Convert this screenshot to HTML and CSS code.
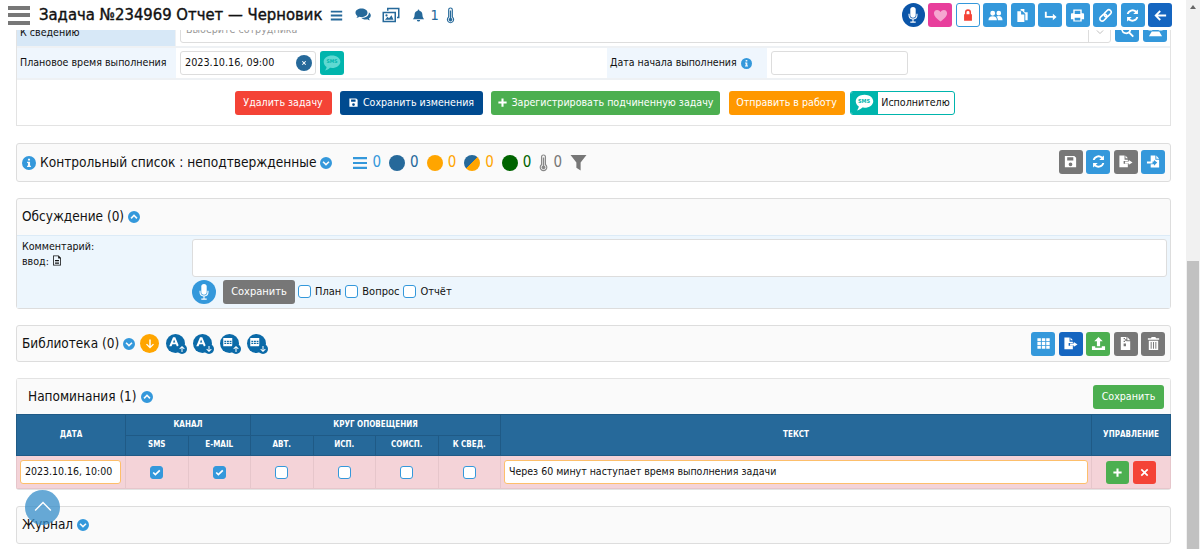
FILE: index.html
```html
<!DOCTYPE html>
<html lang="ru">
<head>
<meta charset="utf-8">
<title>Задача №234969</title>
<link rel="stylesheet" href="styles.css">
</head>
<body>
<svg class="defs" xmlns="http://www.w3.org/2000/svg">
<symbol id="i-bars" viewBox="0 0 16 16"><path d="M1 2h14v2.200H1zM1 6.900h14v2.200H1zM1 11.800h14V14H1z"/></symbol>
<symbol id="i-comments" viewBox="0 0 16 16"><path d="M6.500 1.500C3 1.500.5 3.300.5 5.700c0 1.300.8 2.500 2 3.300-.2.700-.6 1.300-1.100 1.800 1 0 2.100-.5 2.900-1.100.7.200 1.400.3 2.200.3 3.500 0 6-1.900 6-4.300S10 1.500 6.500 1.500z"/><path d="M13.800 5.200c.1.200.1.400.1.600 0 3-3 5-6.800 5l-.9-.1c1 1.100 2.500 1.800 4.300 1.800.6 0 1.200-.1 1.700-.2.800.6 1.700 1 2.800 1-.5-.5-.9-1.100-1.100-1.800 1.200-.8 1.900-1.800 1.900-3 0-1.300-.8-2.500-2-3.300z"/></symbol>
<symbol id="i-images" viewBox="0 0 18 16"><path d="M5 .8h12.500v10.500H15V9.800h1V2.300H6.500v1.500H5zM.5 4.800h13.500v10.500H.5zM2 6.300v7.500h10.500V6.300zM3 12.800l2.500-3 1.500 1.500 2.500-3 2 4.500zM4.500 7.300a1.100 1.100 0 1 1 0 2.200 1.100 1.100 0 0 1 0-2.200z" fill-rule="evenodd"/></symbol>
<symbol id="i-bell" viewBox="0 0 16 16"><path d="M8 .5c.6 0 1 .4 1 1v.6c2.300.4 3.800 2.300 3.800 4.600 0 3.500 1.200 4.500 2.200 5.800H1c1-1.300 2.200-2.300 2.200-5.800C3.200 4.400 4.700 2.500 7 2.100v-.6c0-.6.400-1 1-1zM6 13.500h4a2 2 0 0 1-4 0z"/></symbol>
<symbol id="i-thermo" viewBox="0 0 10 20"><path fill-rule="evenodd" d="M5 .5A2.800 2.800 0 0 1 7.800 3.300v8.200a4.300 4.300 0 1 1-5.600 0V3.300A2.800 2.800 0 0 1 5 .5zm0 1.300c-.8 0-1.500.7-1.500 1.500v8.900a3 3 0 1 0 3 0V3.300C6.500 2.500 5.800 1.800 5 1.800z"/><path d="M4.200 4h1.600v9a2 2 0 1 1-1.600 0z"/></symbol>
<symbol id="i-mic" viewBox="0 0 16 20"><path d="M8 1a3 3 0 0 1 3 3v6a3 3 0 0 1-6 0V4a3 3 0 0 1 3-3z"/><path d="M3 8.500h1.200V10a3.800 3.800 0 0 0 7.600 0V8.500H13V10a5 5 0 0 1-4.400 5v2.300H11v1.200H5v-1.200h2.400V15A5 5 0 0 1 3 10z"/></symbol>
<symbol id="i-heart" viewBox="0 0 16 16"><path d="M8 14.500C3.500 10.800 1 8.400 1 5.500 1 3.300 2.600 2 4.400 2 5.800 2 7.200 2.800 8 4.200 8.800 2.800 10.200 2 11.600 2 13.400 2 15 3.300 15 5.500c0 2.900-2.500 5.300-7 9z"/></symbol>
<symbol id="i-lock" viewBox="0 0 16 16"><path fill-rule="evenodd" d="M4.500 7V5a3.500 3.500 0 0 1 7 0v2h1v7.500h-9V7zm1.800 0h3.400V5a1.700 1.700 0 0 0-3.400 0z"/></symbol>
<symbol id="i-users" viewBox="0 0 16 16"><path d="M5 3a2.600 2.600 0 1 1 0 5.200A2.600 2.600 0 0 1 5 3zM11.500 3a2.500 2.500 0 1 1 0 5 2.500 2.500 0 0 1 0-5zM.5 13c0-2.500 1.500-4.200 4.500-4.200S9.500 10.500 9.500 13zM10.500 13c0-1.700-.5-3-1.600-4 .7-.3 1.600-.5 2.600-.5 2.700 0 4 1.800 4 4.500z"/></symbol>
<symbol id="i-copy" viewBox="0 0 16 16"><path d="M2.500 3.500h4V7h3.500v8h-7.500z"/><path d="M6 1h4v3.500h3.500V13H11V6.500L7.500 3H6z"/></symbol>
<symbol id="i-share" viewBox="0 0 16 16"><path d="M2 4h2v4.500h6.500V6l4 3.500-4 3.500v-2.500H2z"/></symbol>
<symbol id="i-print" viewBox="0 0 16 16"><path fill-rule="evenodd" d="M3.500 1.500h9v4.200h1.300c.7 0 1.200.5 1.200 1.200v5H12.500v2.600h-9v-2.600H1v-5c0-.7.500-1.200 1.200-1.200h1.300zm1.500 1.500v3.500h6V3zm0 7.500v2.800h6v-2.800z"/></symbol>
<symbol id="i-link" viewBox="0 0 16 16"><g transform="rotate(-45 8 8)" fill="none" stroke="currentColor" stroke-width="1.700"><rect x="0.500" y="5.500" width="8.500" height="5" rx="2.500"/><rect x="7" y="5.500" width="8.500" height="5" rx="2.500"/></g></symbol>
<symbol id="i-refresh" viewBox="0 0 16 16"><path d="M13.800 1.500v5h-5l2-2A4.300 4.300 0 0 0 3.900 6.500H1.900a6.300 6.300 0 0 1 10.300-3.500zM2.200 14.500v-5h5l-2 2a4.300 4.300 0 0 0 6.900-2h2a6.300 6.300 0 0 1-10.300 3.500z"/></symbol>
<symbol id="i-back" viewBox="0 0 16 16"><path d="M7 2.500l1.400 1.400L5.300 7H14v2H5.300l3.100 3.100L7 13.500 1.500 8z"/></symbol>
<symbol id="i-search" viewBox="0 0 16 16"><path fill-rule="evenodd" d="M6.500 1a5.500 5.500 0 0 1 4.400 8.800l4 4-1.500 1.500-4-4A5.500 5.500 0 1 1 6.500 1zm0 2a3.500 3.500 0 1 0 0 7 3.500 3.500 0 0 0 0-7z"/></symbol>
<symbol id="i-phone" viewBox="0 0 16 16"><path d="M8 2c3.500 0 6.500 1.300 7.500 3.500V8h-4V6H4.500v2h-4V5.500C1.500 3.300 4.500 2 8 2zM4 9h8l3 5H1z"/></symbol>
<symbol id="i-save" viewBox="0 0 16 16"><path fill-rule="evenodd" d="M2 2h10l2 2v10H2zm2.500 1.500v3.500h6.500V3.500zM8 9a2 2 0 1 0 0 4 2 2 0 0 0 0-4z"/></symbol>
<symbol id="i-export" viewBox="0 0 16 16"><path d="M1.500 1.500H7V6h3.500v1.500H6v3h4.500V14h-9zM8 1.500l2.500 3H8zM11.500 6.500L15.500 9l-4 2.500V10H7.500V8h4z"/></symbol>
<symbol id="i-import" viewBox="0 0 16 16"><path d="M5 1.500h5V6h4v8.500H5v-3.500h3.500v1.500L12 9 8.500 6.500V8H5zM11 1.500l3 3.500h-3zM1 8h6v2H1z"/></symbol>
<symbol id="i-th" viewBox="0 0 16 16"><path d="M1.500 2.500h3.700v3H1.500zM6.200 2.500h3.700v3H6.200zM10.900 2.500h3.700v3h-3.700zM1.500 6.500h3.700v3H1.500zM6.200 6.500h3.700v3H6.200zM10.900 6.500h3.700v3h-3.700zM1.500 10.500h3.700v3H1.500zM6.200 10.500h3.700v3H6.200zM10.900 10.500h3.700v3h-3.700z"/></symbol>
<symbol id="i-upload" viewBox="0 0 16 16"><path d="M8 1l4.500 4.500H9.700V11H6.300V5.500H3.500zM1 11h3.500v1.500h7V11H15v4H1z"/></symbol>
<symbol id="i-zip" viewBox="0 0 16 16"><path fill-rule="evenodd" d="M3 1h6v4.500h4V15H3zm3 1v1.500h1.500V2zm1.500 1.500V5H9V3.500zM6 5v1.500h1.500V5zm0 3v3h2.500V8zM10 1l3 3.500h-3z"/></symbol>
<symbol id="i-trash" viewBox="0 0 16 16"><path fill-rule="evenodd" d="M6 1h4l.7 1.500H14V4H2V2.500h3.300zM3 5h10v10H3zm2 1.500V13.500h1V6.500zm2.500 0V13.500h1V6.500zm2.500 0V13.500h1V6.500z"/></symbol>
<symbol id="i-info" viewBox="0 0 16 16"><path fill-rule="evenodd" d="M8 0a8 8 0 1 1 0 16A8 8 0 0 1 8 0zM6.800 3v2.200h2.400V3zM5.800 6.500V8h1v3H5.800v1.500h4.400V11h-1V6.500z"/></symbol>
<symbol id="i-down" viewBox="0 0 16 16"><path fill-rule="evenodd" d="M8 0a8 8 0 1 1 0 16A8 8 0 0 1 8 0zM4.800 5.500L3.300 7 8 11.700 12.700 7l-1.500-1.500L8 8.700z"/></symbol>
<symbol id="i-up" viewBox="0 0 16 16"><path fill-rule="evenodd" d="M8 0a8 8 0 1 1 0 16A8 8 0 0 1 8 0zM4.800 10.500L3.300 9 8 4.300 12.700 9l-1.500 1.500L8 7.300z"/></symbol>
<symbol id="i-filter" viewBox="0 0 16 16"><path d="M.5 1h15L10 8v7.500L6 13V8z"/></symbol>
<symbol id="i-doc" viewBox="0 0 12 14"><path fill-rule="evenodd" d="M1 .5h7l3 3v10H1zm1 1v11h8V4.500H7.500v-3zM3.500 6.500h5v1h-5zM3.500 8.500h5v1h-5zM3.500 10.500h5v1h-5z"/></symbol>
<symbol id="i-sms" viewBox="0 0 24 24"><path d="M12 3c5.500 0 10 3.200 10 7.500S17.500 18 12 18c-.9 0-1.700-.1-2.500-.2C8 19.500 6 20.500 3.500 21c1-1.200 1.800-2.600 2-4.300C3.400 15.300 2 13 2 10.500 2 6.200 6.500 3 12 3z"/></symbol>
<symbol id="i-check" viewBox="0 0 16 16"><path fill="none" stroke="currentColor" stroke-width="2.400" d="M3.200 8l3.200 3.200L12.800 5"/></symbol>
<symbol id="i-plus" viewBox="0 0 16 16"><path d="M6.500 2h3v4.500H14v3H9.500V14h-3V9.500H2v-3h4.500z"/></symbol>
<symbol id="i-times" viewBox="0 0 16 16"><path d="M4.200 2.500L8 6.300l3.800-3.800 1.700 1.700L9.700 8l3.800 3.800-1.700 1.700L8 9.700l-3.800 3.800-1.700-1.700L6.300 8 2.500 4.200z"/></symbol>
<symbol id="i-arrow-down" viewBox="0 0 16 16"><path d="M7 2h2v8.500l3-3 1.300 1.300L8 14 2.700 8.800 4 7.500l3 3z"/></symbol>
<symbol id="i-arrow-up" viewBox="0 0 16 16"><path d="M7 14h2V5.500l3 3 1.300-1.300L8 2 2.700 7.200 4 8.500l3-3z"/></symbol>
<symbol id="i-font" viewBox="0 0 20 20"><path fill-rule="evenodd" d="M8 3h3l5 12h-3l-1-2.700H7.200L6 15H3zm1.500 3l-1.500 4h3z"/></symbol>
<symbol id="i-cal" viewBox="0 0 20 20"><path fill-rule="evenodd" d="M3 4h12v11H3zm1.500 3.500v1.700h2.500V7.500zm3.500 0v1.700h2.500V7.500zm3.500 0v1.700H14V7.500zm-7 2.700v1.700h2.500v-1.700zm3.500 0v1.700h2.500v-1.700zm3.500 0v1.700H14v-1.700z"/></symbol>
<symbol id="i-caret" viewBox="0 0 16 16"><path fill="none" stroke="currentColor" stroke-width="1.500" d="M3 5.500l5 5 5-5"/></symbol>
</svg>

<main class="page">
  <section class="card form-card">
    <div class="row row-first">
      <div class="lab lab-strong lab-main">К сведению</div>
      <div class="cell cell-select">
        <div class="select"><span class="placeholder">Выберите сотрудника</span><span class="select-caret"><svg><use href="#i-caret"/></svg></span></div>
        <button class="btn sq blue"><svg><use href="#i-search"/></svg></button>
        <button class="btn sq blue"><svg><use href="#i-phone"/></svg></button>
      </div>
    </div>
    <div class="row row-second">
      <div class="lab lab-main">Плановое время выполнения</div>
      <div class="cell cell-date">
        <div class="input date-input">2023.10.16, 09:00<span class="clear"><svg><use href="#i-times"/></svg></span></div>
        <span class="sms-tile"><svg><use href="#i-sms"/></svg><b>SMS</b></span>
      </div>
      <div class="lab lab-start">Дата начала выполнения <svg class="inline-info"><use href="#i-info"/></svg></div>
      <div class="cell cell-start"><div class="input start-input"></div></div>
    </div>
    <div class="actions">
      <button class="btn txt red w-del">Удалить задачу</button>
      <button class="btn txt navy w-save"><svg class="bi"><use href="#i-save"/></svg>Сохранить изменения</button>
      <button class="btn txt green w-reg"><svg class="bi"><use href="#i-plus"/></svg>Зарегистрировать подчиненную задачу</button>
      <button class="btn txt orange w-send">Отправить в работу</button>
      <div class="sms-btn"><span class="sms-btn-ic"><svg><use href="#i-sms"/></svg><b>SMS</b></span><span class="sms-btn-t">Исполнителю</span></div>
    </div>
  </section>

  <section class="panel panel-check">
    <svg class="ic-info"><use href="#i-info"/></svg>
    <span class="title title-check">Контрольный список : неподтвержденные</span>
    <svg class="chev chev-check"><use href="#i-down"/></svg>
    <div class="stats">
      <svg class="st st-bars"><use href="#i-bars"/></svg><span class="n c-blue">0</span>
      <span class="dot d-blue"></span><span class="n c-dblue">0</span>
      <span class="dot d-orange"></span><span class="n c-orange">0</span>
      <span class="dot d-split"></span><span class="n c-orange">0</span>
      <span class="dot d-green"></span><span class="n c-green">0</span>
      <svg class="st-th"><use href="#i-thermo"/></svg><span class="n c-gray">0</span>
      <svg class="st-f"><use href="#i-filter"/></svg>
    </div>
    <div class="tools">
      <button class="btn sq gray"><svg><use href="#i-save"/></svg></button>
      <button class="btn sq blue"><svg><use href="#i-refresh"/></svg></button>
      <button class="btn sq gray"><svg><use href="#i-export"/></svg></button>
      <button class="btn sq blue"><svg><use href="#i-import"/></svg></button>
    </div>
  </section>

  <section class="panel-disc">
    <div class="disc-head"><span class="title">Обсуждение (0)</span><svg class="chev"><use href="#i-up"/></svg></div>
    <div class="disc-body">
      <div class="disc-label"><div>Комментарий:</div><div>ввод: <svg class="doc"><use href="#i-doc"/></svg></div></div>
      <div class="disc-main">
        <div class="textarea"></div>
        <div class="disc-ctrl">
          <span class="mic-round"><svg><use href="#i-mic"/></svg></span>
          <button class="btn txt gray w-sv">Сохранить</button>
          <label class="chk"><span class="cb"></span>План</label>
          <label class="chk"><span class="cb"></span>Вопрос</label>
          <label class="chk"><span class="cb"></span>Отчёт</label>
        </div>
      </div>
    </div>
  </section>

  <section class="panel panel-lib">
    <span class="title">Библиотека (0)</span>
    <svg class="chev"><use href="#i-down"/></svg>
    <span class="round r-orange"><svg class="ra"><use href="#i-arrow-down"/></svg></span>
    <span class="round"><svg class="rm"><use href="#i-font"/></svg><span class="rb"><svg><use href="#i-arrow-up"/></svg></span></span>
    <span class="round"><svg class="rm"><use href="#i-font"/></svg><span class="rb"><svg><use href="#i-arrow-down"/></svg></span></span>
    <span class="round"><svg class="rm"><use href="#i-cal"/></svg><span class="rb"><svg><use href="#i-arrow-up"/></svg></span></span>
    <span class="round"><svg class="rm"><use href="#i-cal"/></svg><span class="rb"><svg><use href="#i-arrow-down"/></svg></span></span>
    <div class="tools">
      <button class="btn sq blue"><svg><use href="#i-th"/></svg></button>
      <button class="btn sq dblue"><svg><use href="#i-export"/></svg></button>
      <button class="btn sq green"><svg><use href="#i-upload"/></svg></button>
      <button class="btn sq gray"><svg><use href="#i-zip"/></svg></button>
      <button class="btn sq gray"><svg><use href="#i-trash"/></svg></button>
    </div>
  </section>

  <section class="panel-rem">
    <div class="rem-head">
      <span class="title">Напоминания (1)</span><svg class="chev"><use href="#i-up"/></svg>
      <button class="btn txt green w-rs">Сохранить</button>
    </div>
    <table class="rem">
      <colgroup>
        <col class="c1"><col class="c2"><col class="c2"><col class="c2"><col class="c2"><col class="c2"><col class="c2"><col><col class="c9">
      </colgroup>
      <thead>
        <tr><th rowspan="2">ДАТА</th><th colspan="2">КАНАЛ</th><th colspan="4">КРУГ ОПОВЕЩЕНИЯ</th><th rowspan="2">ТЕКСТ</th><th rowspan="2">УПРАВЛЕНИЕ</th></tr>
        <tr><th>SMS</th><th>E-MAIL</th><th>АВТ.</th><th>ИСП.</th><th>СОИСП.</th><th>К СВЕД.</th></tr>
      </thead>
      <tbody>
        <tr>
          <td><div class="o-input o-date">2023.10.16, 10:00</div></td>
          <td><span class="cb cb-t on"><svg><use href="#i-check"/></svg></span></td>
          <td><span class="cb cb-t on"><svg><use href="#i-check"/></svg></span></td>
          <td><span class="cb cb-t"></span></td>
          <td><span class="cb cb-t"></span></td>
          <td><span class="cb cb-t"></span></td>
          <td><span class="cb cb-t"></span></td>
          <td><div class="o-input o-text">Через 60 минут наступает время выполнения задачи</div></td>
          <td><div class="ctl"><button class="btn ctl-b green"><svg><use href="#i-plus"/></svg></button><button class="btn ctl-b red"><svg><use href="#i-times"/></svg></button></div></td>
        </tr>
      </tbody>
    </table>
  </section>

  <section class="panel panel-jour">
    <span class="title">Журнал</span><svg class="chev"><use href="#i-down"/></svg>
  </section>
</main>

<aside class="scrollbar"><span class="sb-arrow"></span><span class="sb-thumb"></span></aside>

<header class="top">
  <span class="burger"><i></i><i></i><i></i></span>
  <h1 class="top-title">Задача №234969 Отчет — Черновик</h1>
  <svg class="t-bars"><use href="#i-bars"/></svg>
  <svg class="t-com"><use href="#i-comments"/></svg>
  <svg class="t-img"><use href="#i-images"/></svg>
  <svg class="t-bell"><use href="#i-bell"/></svg><span class="t-num">1</span>
  <svg class="t-th"><use href="#i-thermo"/></svg>
  <div class="top-tools">
    <span class="mic-top"><svg><use href="#i-mic"/></svg></span>
    <button class="btn sq pink"><svg><use href="#i-heart"/></svg></button>
    <button class="btn sq lockb"><svg><use href="#i-lock"/></svg></button>
    <button class="btn sq blue"><svg><use href="#i-users"/></svg></button>
    <button class="btn sq blue"><svg><use href="#i-copy"/></svg></button>
    <button class="btn sq blue"><svg><use href="#i-share"/></svg></button>
    <button class="btn sq blue"><svg><use href="#i-print"/></svg></button>
    <button class="btn sq blue"><svg><use href="#i-link"/></svg></button>
    <button class="btn sq blue"><svg><use href="#i-refresh"/></svg></button>
    <button class="btn sq dblue"><svg><use href="#i-back"/></svg></button>
  </div>
</header>

<a class="to-top"><svg viewBox="0 0 24 14"><path d="M2 12L12 2l10 10" fill="none" stroke="currentColor" stroke-width="1.800"/></svg></a>
</body>
</html>
```
FILE: styles.css
```css
* { box-sizing: border-box; }
html, body { height: 549px; }
body {
  margin: 0;
  display: flex;
  overflow: hidden;
  background: #fff;
  color: #111;
  font: 10.6px/1.3 "DejaVu Sans Condensed", "DejaVu Sans", sans-serif;
}
.defs { width: 0; height: 0; position: absolute; }
svg { fill: currentColor; display: block; }

.page { width: 1186px; padding: 14px 15px 0 16px; flex: none; }
.scrollbar { flex: 1; background: #f1f1f1; display: flex; flex-direction: column; align-items: center; padding: 5px 1px 0; }
.sb-arrow { width: 0; height: 0; border: 3.5px solid transparent; border-top: 0; border-bottom: 4px solid #666; }
.sb-thumb { width: 100%; height: 288px; margin-top: 252px; background: #c1c1c1; }

/* buttons */
.btn { border: 0; border-radius: 3px; color: #fff; padding: 0; display: inline-flex; align-items: center; justify-content: center; font: inherit; }
.sq { width: 24px; height: 24px; flex: none; }
.sq svg { width: 15px; height: 15px; }
.blue { background: #3498db; }
.dblue { background: #1565c0; }
.gray { background: #777; }
.green { background: #4caf50; }
.red { background: #f44336; }
.navy { background: #004a8f; }
.orange { background: #ff9800; }
.pink { background: #e83e9c; }
.pink svg { color: #f5a6d0; }
.lockb { background: #fff; border: 1px solid #3498db; color: #f44336; }
.lockb svg { width: 14px; height: 14px; }
.txt { height: 24px; }
.bi { width: 11px; height: 11px; margin-right: 4px; }
.w-del { width: 97px; margin-right: 8px; }
.w-save { width: 143px; margin-right: 8px; }
.w-reg { width: 229px; margin-right: 9px; }
.w-send { width: 116px; margin-right: 5px; }
.w-sv { width: 72px; margin-right: -1px; }
.w-rs { width: 71px; margin-left: auto; }

/* form card */
.form-card { border: 1px solid #e3e3e3; border-top: 0; margin-bottom: 17px; }
.row { display: flex; border-bottom: 2px solid #eef1f4; }
.row-first { height: 34px; }
.row-second { height: 32px; }
.lab { display: flex; align-items: center; padding: 0 3px; background: #eff6fd; flex: none; }
.lab-main { width: 159px; }
.lab-strong { background: #d7e8f7; align-items: flex-end; padding-bottom: 6px; border-right: 1px solid #eef1f4; }
.lab-start { width: 160px; gap: 4px; font-size: 10.5px; }
.cell { display: flex; align-items: center; gap: 4px; padding: 0 3px 0 4px; }
.cell-select { flex: 1; align-items: flex-start; }
.cell-date { width: 431px; }
.cell-start { flex: 1; }
.select { flex: 1; height: 29px; border: 1px solid #ddd; border-radius: 3px; display: flex; align-items: flex-end; justify-content: space-between; padding: 0 0 5px 5px; }
.placeholder { color: #999; }
.select-caret { width: 22px; height: 22px; border-left: 1px solid #ddd; margin-bottom: -5px; display: flex; align-items: flex-end; justify-content: center; color: #bbb; padding-bottom: 5px; }
.select-caret svg { width: 10px; height: 10px; }
.cell-select .btn { margin-top: 4px; }
.input { height: 24px; border: 1px solid #ddd; border-radius: 3px; background: #fff; display: flex; align-items: center; }
.date-input { width: 136px; padding: 0 3px 0 4px; justify-content: space-between; font-size: 10.75px; }
.start-input { width: 137px; }
.clear { width: 16px; height: 16px; border-radius: 50%; background: #26699a; color: #fff; display: flex; align-items: center; justify-content: center; }
.clear svg { width: 6px; height: 6px; }
.sms-tile { position: relative; width: 24px; height: 24px; border-radius: 3px; background: #00b5ad; color: #5fd9d2; display: flex; align-items: center; justify-content: center; }
.sms-tile svg { width: 20px; height: 20px; }
.sms-tile b { position: absolute; top: 7px; font-size: 5px; color: #00b5ad; }
.inline-info { width: 11px; height: 11px; color: #3498db; }

.actions { height: 45px; display: flex; justify-content: center; align-items: center; padding-left: 2px; }
.sms-btn { width: 105px; height: 24px; display: flex; border: 1px solid #00b5ad; border-radius: 3px; overflow: hidden; }
.sms-btn-ic { position: relative; width: 27px; background: #00b5ad; color: #fff; display: flex; align-items: center; justify-content: center; }
.sms-btn-ic svg { width: 21px; height: 21px; }
.sms-btn-ic b { position: absolute; top: 6px; font-size: 5.5px; color: #00b5ad; }
.sms-btn-t { flex: 1; display: flex; align-items: center; justify-content: center; }

/* panels */
.panel { display: flex; align-items: center; border: 1px solid #ddd; border-radius: 3px; background: #fafafa; padding: 0 5px; margin-bottom: 16px; }
.title { font-size: 13.5px; }
.title-check { font-size: 13.6px; }
.chev { width: 12px; height: 12px; color: #3498db; flex: none; margin-left: 4px; }
.tools { margin-left: auto; display: flex; gap: 3.5px; }
.panel-check { height: 39px; }
.panel-check .tools { margin-top: -2px; }
.ic-info { width: 14px; height: 14px; color: #3498db; margin-right: 4px; }
.stats { display: flex; align-items: center; margin-left: 20px; font-size: 15px; }
.st-bars { width: 16px; height: 16px; color: #3498db; margin-right: -1px; }
.n { margin: 0 8px 0 5px; }
.c-blue { color: #3498db; }
.c-dblue { color: #26699a; }
.c-orange { color: #ffa500; }
.c-green { color: #006400; }
.c-gray { color: #777; }
.dot { width: 16px; height: 16px; border-radius: 50%; }
.d-blue { background: #26699a; }
.d-orange { background: #ffa500; }
.d-green { background: #006400; }
.d-split { background: linear-gradient(135deg, #26699a 50%, #ffa500 50%); }
.st-th { width: 9px; height: 18px; color: #888; }
.st-f { width: 17px; height: 17px; color: #777; margin-left: 0; }

.panel-disc { height: 111px; border: 1px solid #ddd; border-radius: 3px; background: #fafafa; margin-bottom: 16px; }
.disc-head { height: 36px; display: flex; align-items: center; padding: 0 5px; }
.disc-body { height: 73px; background: #edf6fd; border-top: 1px solid #dcebf7; display: flex; padding: 3px 3px 0 5px; }
.disc-label { width: 170px; line-height: 15px; flex: none; }
.doc { display: inline-block; width: 10px; height: 11px; vertical-align: -1px; }
.disc-main { flex: 1; }
.textarea { height: 38px; background: #fff; border: 1px solid #ddd; border-radius: 3px; }
.disc-ctrl { display: flex; align-items: center; margin-top: 3px; font-size: 11px; }
.mic-round { width: 24px; height: 24px; border-radius: 50%; background: #3498db; color: #fff; display: flex; align-items: center; justify-content: center; margin-right: 7px; }
.mic-round svg { width: 16px; height: 18px; }
.chk { display: flex; align-items: center; margin-left: 4px; }
.chk .cb { margin-right: 4px; }
.cb { display: inline-flex; align-items: center; justify-content: center; width: 13px; height: 13px; background: #fff; border: 1.5px solid #3498db; border-radius: 3px; color: #fff; }
.cb svg { width: 11px; height: 11px; }
.cb.on { background: #3498db; }

.panel-lib { height: 37px; }
.panel-lib .chev { margin-right: 5px; }
.round { position: relative; width: 19px; height: 19px; border-radius: 50%; background: #0b6aa8; color: #fff; margin-right: 8px; display: flex; align-items: center; justify-content: center; flex: none; }
.r-orange { background: #ffa500; margin-right: 7px; }
.ra { width: 12px; height: 12px; }
.rm { width: 15px; height: 15px; margin: -2px 0 0 -2px; }
.rb { position: absolute; right: -2px; bottom: -1px; width: 10px; height: 10px; border-radius: 50%; background: #0b6aa8; display: flex; align-items: center; justify-content: center; }
.rb svg { width: 8px; height: 8px; }

.panel-rem { height: 112px; border-top: 1px solid #e3e3e3; border-bottom: 1px solid #e3e3e3; border-radius: 3px; margin-bottom: 16px; overflow: hidden; }
.rem-head { height: 35px; display: flex; align-items: center; padding: 0 6px 0 11px; background: #fafafa; border: solid #e3e3e3; border-width: 0 1px; }
.rem { width: 100%; border-collapse: collapse; table-layout: fixed; }
.c1 { width: 109px; }
.c2 { width: 62.5px; }
.c9 { width: 79px; }
.rem th { background: #26699a; color: #fff; font-size: 8px; font-weight: bold; height: 20.5px; padding: 0; border: 1px solid #1f5a86; text-align: center; }
.rem td { background: #f4d3d8; height: 33px; padding: 0; border: 1px solid #e6c6cb; text-align: center; vertical-align: middle; }
.cb-t { width: 13px; height: 13px; vertical-align: middle; }
.o-input { height: 24px; background: #fff; border: 1px solid #fdbf6b; border-radius: 3px; display: flex; align-items: center; padding: 0 4px; margin: 0 3px; font-size: 10.5px; }
.o-date { white-space: nowrap; margin: 0 4px 0 3px; }
.ctl { display: flex; justify-content: center; gap: 4px; }
.ctl-b { width: 23px; height: 23px; }
.ctl-b svg { width: 11px; height: 11px; }

.panel-jour { height: 38px; margin-bottom: 0; }

/* fixed header */
.top { position: fixed; left: 0; top: 0; width: 1186px; height: 30px; background: #fff; display: flex; align-items: center; padding: 0 14px 0 8px; color: #26699a; }
.burger { width: 22px; height: 19px; display: flex; flex-direction: column; justify-content: space-between; margin-right: 9px; }
.burger i { height: 4px; background: #777; }
.top-title { margin: 0 8px 0 0; font-size: 16.5px; font-weight: normal; -webkit-text-stroke: .4px #111; color: #111; white-space: nowrap; }
.t-bars { width: 13px; height: 15px; margin-right: 11px; }
.t-com { width: 18px; height: 16px; margin-right: 10px; }
.t-img { width: 18px; height: 16px; margin-right: 12px; }
.t-bell { width: 13px; height: 15px; margin-right: 5px; }
.t-num { font-size: 14.5px; margin-right: 7px; }
.t-th { width: 9px; height: 17px; }
.top-tools { margin-left: auto; display: flex; align-items: center; gap: 3.5px; }
.mic-top { width: 23px; height: 24px; border-radius: 50%; background: #0b55a8; color: #fff; display: flex; align-items: center; justify-content: center; }
.mic-top svg { width: 16px; height: 18px; }

.to-top { position: fixed; left: 25px; top: 490px; width: 35px; height: 35px; border-radius: 50%; background: rgba(52, 140, 200, .75); color: #fff; display: flex; align-items: center; justify-content: center; }
.to-top svg { width: 20px; height: 11px; margin-top: -3px; }
```
